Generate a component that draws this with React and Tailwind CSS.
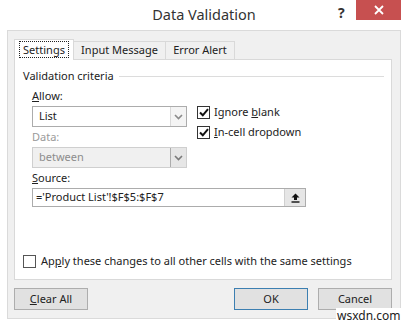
import React from "react";

const font = { fontFamily: '"Noto Sans", "Liberation Sans", sans-serif' };

function Chevron({ color = "#888" }) {
  return (
    <svg width="9" height="6" viewBox="0 0 9 6">
      <path d="M1 1 L4.5 4.5 L8 1" fill="none" stroke={color} strokeWidth="1.6" />
    </svg>
  );
}

function Check() {
  return (
    <span className="w-[13px] h-[13px] border border-[#333] bg-white flex items-center justify-center">
      <svg width="10" height="9" viewBox="0 0 10 9">
        <path d="M1 4.5 L3.8 7.3 L9 1.2" fill="none" stroke="#111" strokeWidth="2" />
      </svg>
    </span>
  );
}

function Combo({ value, disabled }) {
  return (
    <div
      className={
        "h-[21px] w-[155px] border flex items-stretch " +
        (disabled ? "border-[#cfcfcf] bg-[#f0f0f0] text-[#8d8d8d]" : "border-[#acacac] bg-white text-[#222]")
      }
    >
      <div className="flex-1 pl-[6px] flex items-center text-[11px]">{value}</div>
      <div
        className={
          "w-[16px] flex items-center justify-center border-l " +
          (disabled ? "border-[#acacac] bg-[#e6e6e6]" : "border-[#d9d9d9] bg-[#f4f4f4]")
        }
      >
        <Chevron color={disabled ? "#7a7a7a" : "#8a8a8a"} />
      </div>
    </div>
  );
}

function Btn({ children, primary }) {
  return (
    <div
      className={
        "w-[74px] h-[22px] flex items-center justify-center text-[11px] text-[#222] bg-[#e1e1e1] border " +
        (primary ? "border-[#3c7fb1]" : "border-[#adadad]")
      }
    >
      {children}
    </div>
  );
}

export default function App() {
  return (
    <div style={font} className="w-[408px] h-[325px] bg-white flex flex-col relative overflow-hidden text-[#222]">
      {/* title bar */}
      <div className="h-[30px] shrink-0 flex items-center justify-center text-[14.5px] text-[#333] pb-[1px]">
        Data Validation
      </div>
      <div className="absolute left-[338px] top-[2px] text-[14px] font-bold text-[#333]">?</div>
      <div className="absolute left-[356px] top-0 w-[45px] h-[20px] bg-[#c75050] flex items-center justify-center">
        <svg width="10" height="10" viewBox="0 0 10 10">
          <path d="M1 1 L9 9 M9 1 L1 9" stroke="#fff" strokeWidth="1.8" />
        </svg>
      </div>

      {/* body */}
      <div className="mx-[7px] mb-[6px] flex-1 bg-[#f0f0f0] border border-[#dadada] flex flex-col pl-[6px] pr-[8px] pt-[7px]">
        {/* tabs */}
        <div className="flex items-end h-[21px] text-[11px]">
          <div className="w-[60px] h-[21px] bg-white border border-b-0 border-[#d9d9d9] flex items-center justify-center relative z-10 -mb-px pb-px">
            <span className="border border-dotted border-[#222] px-[3px] leading-[15px]">Settings</span>
          </div>
          <div className="w-[92px] h-[18px] bg-[#f0f0f0] border border-l-0 border-b-0 border-[#d9d9d9] flex items-center justify-center">
            Input Message
          </div>
          <div className="w-[69px] h-[18px] bg-[#f0f0f0] border border-l-0 border-b-0 border-[#d9d9d9] flex items-center justify-center">
            Error Alert
          </div>
        </div>

        {/* panel */}
        <div className="h-[221px] bg-white border border-[#d9d9d9] flex flex-col pt-[8px] text-[11px]">
          <div className="flex items-center h-[16px] pl-[8px] pr-[7px]">
            <span>Validation criteria</span>
            <div className="flex-1 h-px bg-[#dcdcdc] ml-[5px]" />
          </div>
          <div className="flex pl-[17px]">
            <div className="w-[155px] flex flex-col">
              <div className="mt-[4px] h-[16px] leading-[16px]">
                <span className="underline">A</span>llow:
              </div>
              <div className="mt-[2px]">
                <Combo value="List" />
              </div>
              <div className="mt-[2px] h-[16px] leading-[16px] text-[#9a9a9a]">Data:</div>
              <div className="mt-[2px]">
                <Combo value="between" disabled />
              </div>
              <div className="mt-[2px] h-[16px] leading-[16px]">
                <span className="underline">S</span>ource:
              </div>
            </div>
            <div className="ml-[10px] pt-[22px] flex flex-col gap-[7px]">
              <div className="flex items-center gap-[4px] h-[13px]">
                <Check />
                <span>
                  Ignore <span className="underline">b</span>lank
                </span>
              </div>
              <div className="flex items-center gap-[4px] h-[13px]">
                <Check />
                <span>
                  <span className="underline">I</span>n-cell dropdown
                </span>
              </div>
            </div>
          </div>
          <div className="ml-[17px] mt-[2px] w-[274px] h-[19px] border border-[#acacac] bg-white flex items-stretch">
            <div className="flex-1 pl-[3px] flex items-center">='Product List'!$F$5:$F$7</div>
            <div className="w-[21px] bg-[#e6e6e6] border-l border-[#d0d0d0] flex items-center justify-center">
              <svg width="9" height="10" viewBox="0 0 9 10">
                <path d="M4.5 0.5 L8.5 4.5 L6 4.5 L6 7 L3 7 L3 4.5 L0.5 4.5 Z" fill="#111" />
                <rect x="0.5" y="8.3" width="8" height="1.4" fill="#111" />
              </svg>
            </div>
          </div>
          <div className="flex items-center ml-[8px] mt-[46px] gap-[5px]">
            <span className="w-[13px] h-[13px] border border-[#555] bg-white" />
            <span>
              Ap<span className="underline">p</span>ly these changes to all other cells with the same settings
            </span>
          </div>
        </div>

        {/* buttons */}
        <div className="flex mt-[8px]">
          <Btn>
            <span>
              <span className="underline">C</span>lear All
            </span>
          </Btn>
          <div className="flex-1" />
          <Btn primary>OK</Btn>
          <div className="w-[10px]" />
          <Btn>Cancel</Btn>
        </div>
      </div>

      <div className="absolute left-[336px] top-[308px] bg-white text-[12px] leading-[15px] text-[#222] px-[1px]">
        wsxdn.com
      </div>
    </div>
  );
}
